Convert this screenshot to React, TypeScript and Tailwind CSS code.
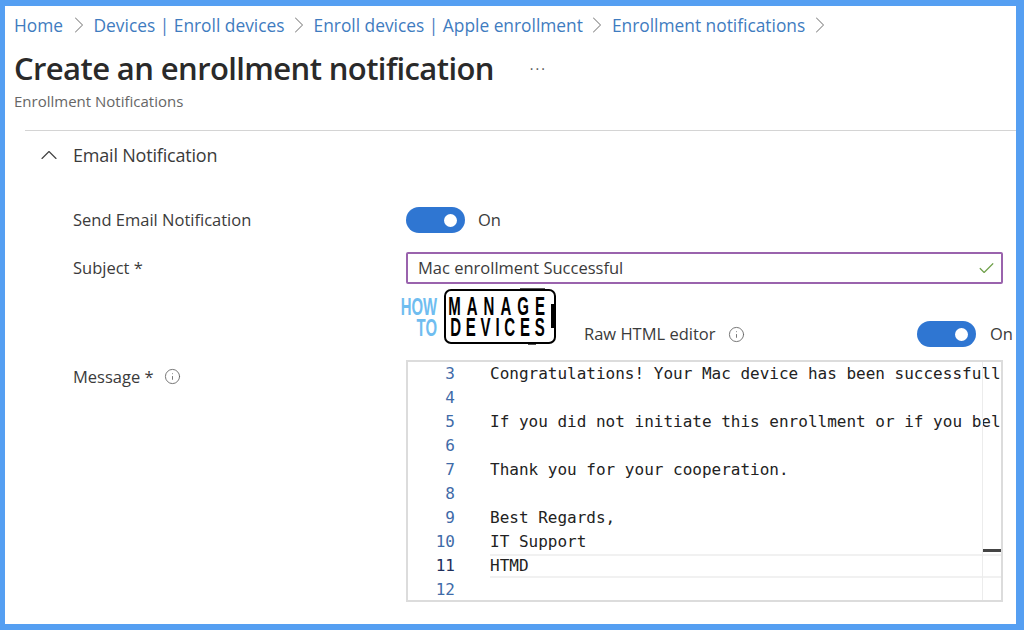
import React from "react";
import { ChevronRight, ChevronUp, Check, Info } from "lucide-react";

const crumbs = ["Home", "Devices | Enroll devices", "Enroll devices | Apple enrollment", "Enrollment notifications"];

const code: [number, string][] = [
  [3, "Congratulations! Your Mac device has been successfully"],
  [4, ""],
  [5, "If you did not initiate this enrollment or if you believe"],
  [6, ""],
  [7, "Thank you for your cooperation."],
  [8, ""],
  [9, "Best Regards,"],
  [10, "IT Support"],
  [11, "HTMD"],
  [12, ""],
];

function Toggle() {
  return (
    <div className="flex h-[26px] w-[59px] items-center justify-end rounded-full bg-[#2f76d2] pr-[8px]">
      <div className="h-[13px] w-[13px] rounded-full bg-white" />
    </div>
  );
}

function Logo() {
  return (
    <div className="flex h-[55px] items-center gap-[7px] font-['Liberation_Sans',sans-serif]">
      <div className="flex w-[37px] origin-right scale-x-[0.62] flex-col items-end text-[24px] leading-[21px] font-bold text-[#6fbdf0]">
        <span>HOW</span>
        <span>TO</span>
      </div>
      <div className="relative flex h-[55px] w-[112px] flex-col items-center justify-center rounded-[7px] border-[2px] border-black bg-white text-[25px] leading-[21px] font-bold text-black">
        <span className="scale-x-[0.6] tracking-[10px] whitespace-nowrap">MANAGE</span>
        <span className="scale-x-[0.6] tracking-[8px] whitespace-nowrap">DEVICES</span>
        <div className="absolute top-[13px] -right-[1px] h-[24px] w-[4px] bg-black" />
        <div className="absolute -top-[3px] left-[74px] h-[1px] w-[25px] bg-[#555555]" />
        <div className="absolute -bottom-[3px] left-[82px] h-[1px] w-[8px] bg-[#555555]" />
      </div>
    </div>
  );
}

export default function App() {
  return (
    <div className="h-[630px] w-[1024px] overflow-hidden bg-[#559ff2] pt-[6px] pr-[8px] pb-[6px] pl-[5px] font-['Open_Sans',sans-serif]">
      <div className="flex h-full flex-col bg-white">
        <nav className="flex h-[37px] items-center pl-[9px] pt-[1px] text-[17.35px] text-[#3f7cc0]">
          {crumbs.map((c, i) => (
            <React.Fragment key={c}>
              <span className={i === 0 ? "mr-[1.5px] whitespace-nowrap" : "whitespace-nowrap"}>{c}</span>
              <ChevronRight className="mx-[0.5px] h-[28px] w-[28px] text-[#8a8a8a]" strokeWidth={0.9} />
            </React.Fragment>
          ))}
        </nav>

        <div className="flex items-center pl-[9px] pt-[3px]">
          <h1 className="text-[31px] leading-[44px] font-semibold tracking-[-0.6px] text-[#2a2a2a] whitespace-nowrap">
            Create an enrollment notification
          </h1>
          <span className="ml-[36px] mt-[2px] text-[14px] leading-none tracking-[2px] text-[#555555]">···</span>
        </div>
        <div className="mt-[1px] pl-[9px] text-[15px] leading-[20px] text-[#666666]">Enrollment Notifications</div>

        <div className="mt-[19px] ml-[20px] border-t border-[#d4d4d4]" />

        <div className="flex items-center pt-[12px] pl-[30px] text-[18px] leading-[24px] tracking-[-0.2px] text-[#3b3b3b]">
          <ChevronUp className="-my-[2px] mr-[10px] h-[28px] w-[28px] text-[#444444]" strokeWidth={1} />
          Email Notification
        </div>

        <div className="mt-[40px] grid grid-cols-[333px_597px] pl-[68px] text-[16.5px] text-[#3b3b3b]">
          <div className="flex h-[26px] items-center">Send Email Notification</div>
          <div className="flex h-[26px] items-center gap-[13px]">
            <Toggle />
            <span>On</span>
          </div>

          <div className="mt-[19px] flex h-[32px] items-center">Subject *</div>
          <div className="mt-[19px] flex h-[32px] items-center justify-between rounded-[2px] border-[2px] border-[#9a63ad] pr-[5px] pl-[10px]">
            <span>Mac enrollment Successful</span>
            <Check className="h-[19px] w-[19px] text-[#6fa04a]" strokeWidth={1.5} />
          </div>

          <div />
          <div className="relative flex h-[76px] items-end justify-between pb-[13px]">
            <div className="absolute top-[5px] -left-[6px]">
              <Logo />
            </div>
            <div className="ml-[178px] flex h-[26px] items-center gap-[12px]">
              <span>Raw HTML editor</span>
              <Info className="h-[17px] w-[17px] text-[#666666]" strokeWidth={1.25} />
            </div>
            <div className="-mr-[10px] flex h-[26px] items-center gap-[14px]">
              <Toggle />
              <span>On</span>
            </div>
          </div>

          <div className="flex h-[242px] items-start gap-[10px] pt-[5px]">
            <span className="leading-[24px]">Message *</span>
            <Info className="mt-[3px] h-[17px] w-[17px] text-[#666666]" strokeWidth={1.25} />
          </div>
          <div className="relative flex h-[242px] overflow-hidden border-[2px] border-[#dcdcdc] font-['DejaVu_Sans_Mono',monospace] text-[16px] leading-[24px]">
            <div className="w-[47px] shrink-0 text-right text-[#3f6ba8]">
              {code.map(([n]) => (
                <div key={n} className={n === 11 ? "h-[24px] text-[#1f2f5c]" : "h-[24px]"}>
                  {n}
                </div>
              ))}
            </div>
            <div className="ml-[35px] min-w-0 flex-1 overflow-hidden text-[#222222]">
              {code.map(([n, t]) => (
                <div
                  key={n}
                  className={
                    n === 11
                      ? "h-[24px] border-y-[2px] border-[#f1f1f1] leading-[20px] whitespace-pre"
                      : "h-[24px] whitespace-pre"
                  }
                >
                  {t}
                </div>
              ))}
            </div>
            <div className="absolute top-0 right-0 bottom-0 w-[19px] border-l border-[#ececec]">
              <div className="absolute top-[187px] left-0 h-[3px] w-full bg-[#444444]" />
            </div>
          </div>
        </div>
      </div>
    </div>
  );
}
